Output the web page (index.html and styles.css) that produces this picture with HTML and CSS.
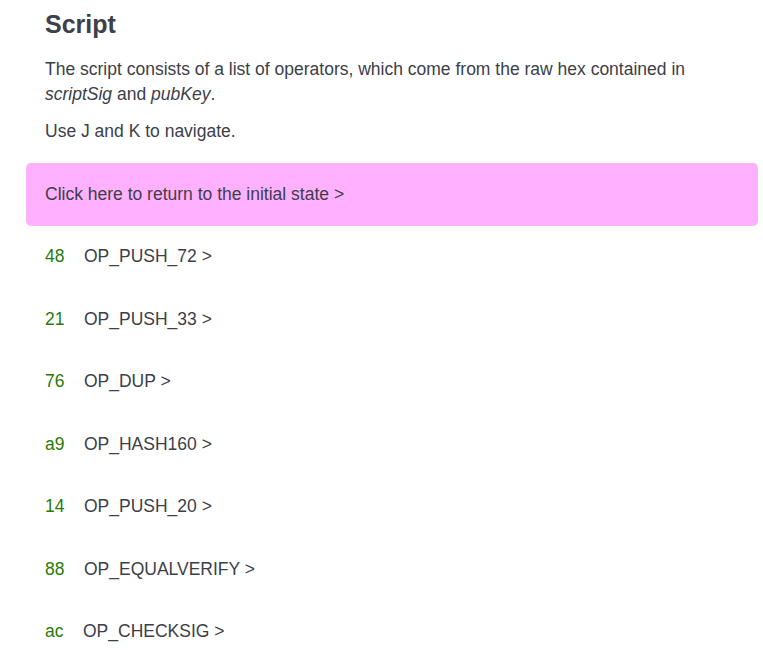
FILE: index.html
```html
<!DOCTYPE html>
<html lang="en">
<head>
  <meta charset="UTF-8">
  <title>Script</title>
  <meta name="viewport" content="width=device-width, initial-scale=1.0">
  <link rel="stylesheet" href="styles.css">
</head>
<body>
  <div id="script-panel">
    <div class="intro">
      <h2>Script</h2>
      <p>The script consists of a list of operators, which come from the raw hex contained in <em>scriptSig</em> and <em>pubKey</em>.</p>
      <p>Use J and K to navigate.</p>
    </div>
    <ul id="op-list">
      <li class="op reset">Click here to return to the initial state &gt;</li>
      <li class="op"><span class="hex">48</span>OP_PUSH_72 &gt;</li>
      <li class="op"><span class="hex">21</span>OP_PUSH_33 &gt;</li>
      <li class="op"><span class="hex">76</span>OP_DUP &gt;</li>
      <li class="op"><span class="hex">a9</span>OP_HASH160 &gt;</li>
      <li class="op"><span class="hex">14</span>OP_PUSH_20 &gt;</li>
      <li class="op"><span class="hex">88</span>OP_EQUALVERIFY &gt;</li>
      <li class="op"><span class="hex">ac</span>OP_CHECKSIG &gt;</li>
    </ul>
  </div>
</body>
</html>
```

FILE: styles.css
```css
body { font-family: "Liberation Sans", Arial, sans-serif; font-size: 17.5px; line-height: 25.1px; color: #3c4049; background: #fff; margin: 0; }
#script-panel { padding: 0 5px 0 26px; }
.intro { padding: 0 19px; }
.intro h2 { font-size: 25px; line-height: 30px; margin: 9px 0 18px 0; font-weight: bold; }
.intro p { margin: 0 0 11.5px 0; }
#op-list { list-style: none; margin: 19.5px 0 0 0; padding: 0; }
.op { padding: 18.7px 19px; cursor: pointer; border-radius: 5px; }
.op.reset { background: #ffb0ff; }
.hex { color: #2a7a0a; margin-right: 19.5px; }
```
